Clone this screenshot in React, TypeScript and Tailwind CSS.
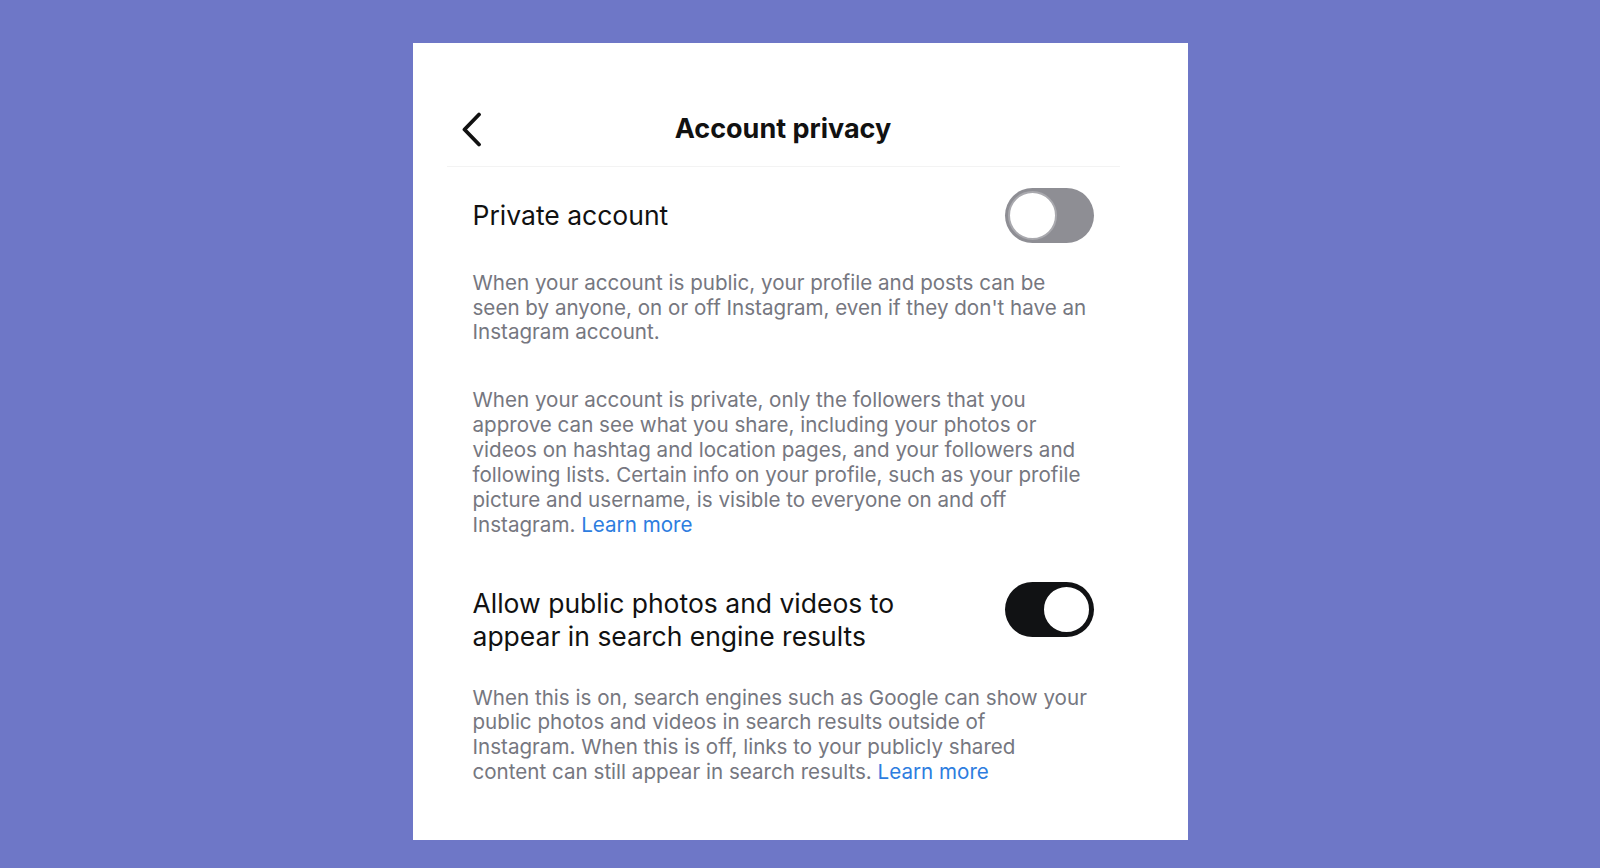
import React from "react";

const font = { fontFamily: "Inter, 'Noto Sans', sans-serif" };

function Toggle({ on }: { on: boolean }) {
  return on ? (
    <div className="relative h-[55px] w-[89px] shrink-0 rounded-full bg-[#111214]">
      <div className="absolute right-[3px] top-[3px] h-[49px] w-[49px] rounded-full border-[2px] border-[#111214] bg-white" />
    </div>
  ) : (
    <div className="relative h-[55px] w-[89px] shrink-0 rounded-full bg-[#8e8e94]">
      <div className="absolute left-[3px] top-[3px] h-[49px] w-[49px] rounded-full border-[2px] border-[#a9a9ae] bg-white" />
    </div>
  );
}

export default function App() {
  return (
    <div className="min-h-[868px] w-full bg-[#6e77c7] pt-[43px]" style={font}>
      <div className="mx-auto h-[797px] w-[775px] bg-white pl-[34px] pr-[68px]">
        <div className="relative flex h-[124px] items-end justify-center border-b border-[#f3f3f3] pb-[9px]">
          <div className="absolute left-[13px] top-[69px]">
            <svg width="24" height="35" viewBox="0 0 24 35" fill="none">
              <path d="M19 2.5 L4.5 17.5 L19 32.5" stroke="#111" strokeWidth="3.8" strokeLinecap="round" strokeLinejoin="round" />
            </svg>
          </div>
          <div className="flex h-[56px] items-center text-[27px] font-bold text-[#111]">
            Account privacy
          </div>
        </div>

        <div className="px-[26px]">
          <div className="mt-[21px] flex h-[55px] items-center justify-between">
            <div className="text-[26.5px] leading-[33px] text-[#111]">Private account</div>
            <Toggle on={false} />
          </div>

          <p className="mt-[28px] text-[20.6px] leading-[24.7px] text-[#76777f] whitespace-nowrap">
            When your account is public, your profile and posts can be
            <br />
            seen by anyone, on or off Instagram, even if they don't have an
            <br />
            Instagram account.
          </p>

          <p className="mt-[43px] text-[20.6px] leading-[24.9px] text-[#76777f] whitespace-nowrap">
            When your account is private, only the followers that you
            <br />
            approve can see what you share, including your photos or
            <br />
            videos on hashtag and location pages, and your followers and
            <br />
            following lists. Certain info on your profile, such as your profile
            <br />
            picture and username, is visible to everyone on and off
            <br />
            Instagram. <span className="text-[#2d7ddf]">Learn more</span>
          </p>

          <div className="mt-[44px] flex items-start justify-between">
            <div className="mt-[5px] text-[26.5px] leading-[33px] text-[#111] whitespace-nowrap">
              Allow public photos and videos to
              <br />
              appear in search engine results
            </div>
            <Toggle on={true} />
          </div>

          <p className="mt-[33px] text-[20.6px] leading-[24.9px] text-[#76777f] whitespace-nowrap">
            When this is on, search engines such as Google can show your
            <br />
            public photos and videos in search results outside of
            <br />
            Instagram. When this is off, links to your publicly shared
            <br />
            content can still appear in search results.{" "}
            <span className="text-[#2d7ddf]">Learn more</span>
          </p>
        </div>
      </div>
    </div>
  );
}
